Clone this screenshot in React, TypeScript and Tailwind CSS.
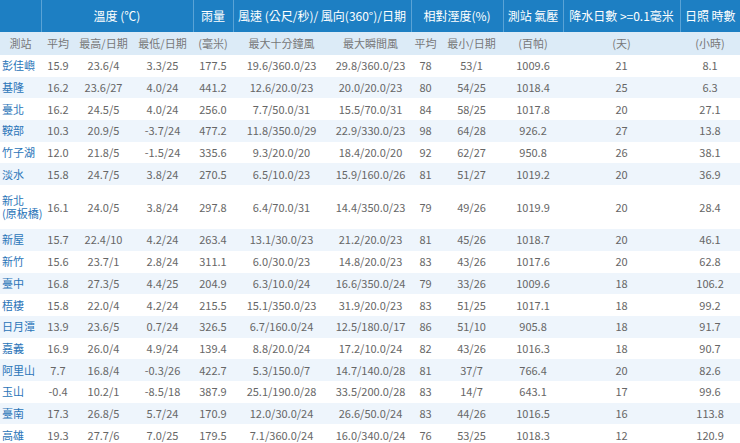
const rows: string[][] = [
  ["彭佳嶼", "15.9", "23.6/4", "3.3/25", "177.5", "19.6/360.0/23", "29.8/360.0/23", "78", "53/1", "1009.6", "21", "8.1"],
  ["基隆", "16.2", "23.6/27", "4.0/24", "441.2", "12.6/20.0/23", "20.0/20.0/23", "80", "54/25", "1018.4", "25", "6.3"],
  ["臺北", "16.2", "24.5/5", "4.0/24", "256.0", "7.7/50.0/31", "15.5/70.0/31", "84", "58/25", "1017.8", "20", "27.1"],
  ["鞍部", "10.3", "20.9/5", "-3.7/24", "477.2", "11.8/350.0/29", "22.9/330.0/23", "98", "64/28", "926.2", "27", "13.8"],
  ["竹子湖", "12.0", "21.8/5", "-1.5/24", "335.6", "9.3/20.0/20", "18.4/20.0/20", "92", "62/27", "950.8", "26", "38.1"],
  ["淡水", "15.8", "24.7/5", "3.8/24", "270.5", "6.5/10.0/23", "15.9/160.0/26", "81", "51/27", "1019.2", "20", "36.9"],
  ["新北\n(原板橋)", "16.1", "24.0/5", "3.8/24", "297.8", "6.4/70.0/31", "14.4/350.0/23", "79", "49/26", "1019.9", "20", "28.4"],
  ["新屋", "15.7", "22.4/10", "4.2/24", "263.4", "13.1/30.0/23", "21.2/20.0/23", "81", "45/26", "1018.7", "20", "46.1"],
  ["新竹", "15.6", "23.7/1", "2.8/24", "311.1", "6.0/30.0/23", "14.8/20.0/23", "83", "43/26", "1017.6", "20", "62.8"],
  ["臺中", "16.8", "27.3/5", "4.4/25", "204.9", "6.3/10.0/24", "16.6/350.0/24", "79", "33/26", "1009.6", "18", "106.2"],
  ["梧棲", "15.8", "22.0/4", "4.2/24", "215.5", "15.1/350.0/23", "31.9/20.0/23", "83", "51/25", "1017.1", "18", "99.2"],
  ["日月潭", "13.9", "23.6/5", "0.7/24", "326.5", "6.7/160.0/24", "12.5/180.0/17", "86", "51/10", "905.8", "18", "91.7"],
  ["嘉義", "16.9", "26.0/4", "4.9/24", "139.4", "8.8/20.0/24", "17.2/10.0/24", "82", "43/26", "1016.3", "18", "90.7"],
  ["阿里山", "7.7", "16.8/4", "-0.3/26", "422.7", "5.3/150.0/7", "14.7/140.0/28", "81", "37/7", "766.4", "20", "82.6"],
  ["玉山", "-0.4", "10.2/1", "-8.5/18", "387.9", "25.1/190.0/28", "33.5/200.0/28", "83", "14/7", "643.1", "17", "99.6"],
  ["臺南", "17.3", "26.8/5", "5.7/24", "170.9", "12.0/30.0/24", "26.6/50.0/24", "83", "44/26", "1016.5", "16", "113.8"],
  ["高雄", "19.3", "27.7/6", "7.0/25", "179.5", "7.1/360.0/24", "16.0/340.0/24", "76", "53/25", "1018.3", "12", "120.9"],
];

const widths = [41, 34, 57, 61, 40, 97, 81, 29, 63, 60, 117, 60];
const sub = ["測站", "平均", "最高/日期", "最低/日期", "(毫米)", "最大十分鐘風", "最大瞬間風", "平均", "最小/日期", "(百帕)", "(天)", "(小時)"];

export default function App() {
  return (
    <div className="w-[740px] h-[443px] overflow-hidden bg-white" style={{ fontFamily: '"Noto Sans CJK TC", "Noto Sans", sans-serif' }}>
      <table className="w-[740px] table-fixed border-collapse text-[11px] text-[#666]">
        <colgroup>
          {widths.map((w, i) => (
            <col key={i} style={{ width: w }} />
          ))}
        </colgroup>
        <thead>
          <tr className="h-[32px] bg-[#1d7fc3] text-white text-[12px]">
            <th className="font-normal border-r border-[#5aa3d6]"></th>
            <th colSpan={3} className="font-normal border-r border-[#5aa3d6]">溫度 (℃)</th>
            <th className="font-normal border-r border-[#5aa3d6]">雨量</th>
            <th colSpan={2} className="font-normal border-r border-[#5aa3d6] whitespace-nowrap">風速 (公尺/秒)/ 風向(360°)/日期</th>
            <th colSpan={2} className="font-normal border-r border-[#5aa3d6]">相對溼度(%)</th>
            <th className="font-normal border-r border-[#5aa3d6]">測站 氣壓</th>
            <th className="font-normal border-r border-[#5aa3d6] whitespace-nowrap">降水日數 &gt;=0.1毫米</th>
            <th className="font-normal">日照 時數</th>
          </tr>
          <tr className="h-[23px] bg-[#dcebf7] text-[#777] text-[11px]">
            {sub.map((s, i) => (
              <th key={i} className="font-normal whitespace-nowrap">{s}</th>
            ))}
          </tr>
        </thead>
        <tbody>
          {rows.map((r, i) => (
            <tr key={i} className={`${r[0].includes("\n") ? "h-[44px]" : "h-[21.7px]"} ${i % 2 ? "bg-[#eef5fc]" : "bg-white"}`}>
              {r.map((c, j) => (
                <td key={j} className={j === 0 ? "p-0 text-left pl-[2px] text-[#2a74b8] whitespace-pre leading-[13px]" : "p-0 text-center whitespace-nowrap leading-[13px]"}>
                  {c}
                </td>
              ))}
            </tr>
          ))}
        </tbody>
      </table>
    </div>
  );
}
